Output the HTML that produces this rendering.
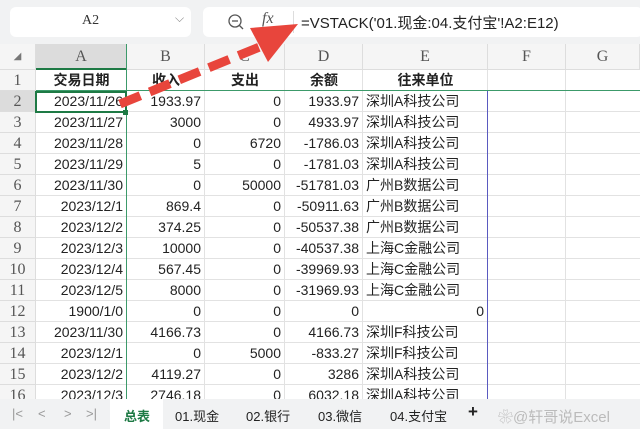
<!DOCTYPE html>
<html><head><meta charset="utf-8"><style>
*{margin:0;padding:0;box-sizing:border-box}
body{width:640px;height:429px;overflow:hidden;background:#fff;position:relative;font-family:"Liberation Sans","Noto Sans CJK SC",sans-serif;font-size:14px;color:#222}
.top{position:absolute;left:0;top:0;width:640px;height:44px;background:#f1f2f3}
.nb{position:absolute;left:10px;top:7px;width:181px;height:30px;background:#fff;border-radius:6px}
.fb{position:absolute;left:203px;top:7px;width:440px;height:30px;background:#fff;border-radius:6px}
.c{position:absolute;height:21px;line-height:21px;white-space:nowrap;overflow:hidden}
.hdr{position:absolute;top:44px;height:26px;line-height:26px;text-align:center;font-family:"Liberation Serif",serif;font-size:16px;color:#555;background:#f5f5f5;border-right:1px solid #ddd;border-bottom:1px solid #ddd}
.rh{position:absolute;left:0;width:36px;height:21px;line-height:21px;text-align:center;font-family:"Liberation Serif",serif;font-size:16px;color:#555;background:#f5f5f5;border-bottom:1px solid #ddd;border-right:1px solid #ddd}
.vl{position:absolute;top:70px;width:1px;height:330px;background:#e2e2e2}
.hl{position:absolute;left:36px;width:604px;height:1px;background:#e2e2e2}
.r{text-align:right;padding-right:4px}
.l{text-align:left;padding-left:3px}
.tabs{position:absolute;left:0;top:399px;width:640px;height:30px;background:#f1f2f3;font-size:13px}
.tabs span{position:absolute;top:7px}
</style></head><body>
<div class="top">
<div class="nb"><div style="position:absolute;left:72px;top:6px;font-family:'Liberation Serif',serif;font-size:14px;color:#333">A2</div><div style="position:absolute;left:165px;top:4px;color:#888;font-size:12px">⌵</div></div>
<div class="fb">
<svg style="position:absolute;left:24px;top:6px" width="18" height="18"><circle cx="8" cy="8" r="6" fill="none" stroke="#555" stroke-width="1.3"/><line x1="5" y1="8" x2="11" y2="8" stroke="#555" stroke-width="1.3"/><line x1="12" y1="12" x2="16" y2="16" stroke="#555" stroke-width="1.3"/></svg>
<div style="position:absolute;left:59px;top:3px;font-family:'Liberation Serif',serif;font-style:italic;font-size:16px;color:#555">fx</div>
<div style="position:absolute;left:90px;top:4px;width:1px;height:22px;background:#ddd"></div>
<div style="position:absolute;left:98px;top:5px;font-size:15px;color:#222">=VSTACK('01.现金:04.支付宝'!A2:E12)</div>
</div>
</div>
<div class="hdr" style="left:0;width:36px;font-size:10px;color:#777">◢</div>
<div class="hdr" style="left:36px;width:91px;background:#dcdcdc;border-bottom:2px solid #1e7a45">A</div>
<div class="hdr" style="left:127px;width:78px">B</div>
<div class="hdr" style="left:205px;width:80px">C</div>
<div class="hdr" style="left:285px;width:78px">D</div>
<div class="hdr" style="left:363px;width:125px">E</div>
<div class="hdr" style="left:488px;width:78px">F</div>
<div class="hdr" style="left:566px;width:74px">G</div>
<div id="g"></div>
<script>
var d=[["交易日期","收入","支出","余额","往来单位"],
["2023/11/26","1933.97","0","1933.97","深圳A科技公司"],
["2023/11/27","3000","0","4933.97","深圳A科技公司"],
["2023/11/28","0","6720","-1786.03","深圳A科技公司"],
["2023/11/29","5","0","-1781.03","深圳A科技公司"],
["2023/11/30","0","50000","-51781.03","广州B数据公司"],
["2023/12/1","869.4","0","-50911.63","广州B数据公司"],
["2023/12/2","374.25","0","-50537.38","广州B数据公司"],
["2023/12/3","10000","0","-40537.38","上海C金融公司"],
["2023/12/4","567.45","0","-39969.93","上海C金融公司"],
["2023/12/5","8000","0","-31969.93","上海C金融公司"],
["1900/1/0","0","0","0","0"],
["2023/11/30","4166.73","0","4166.73","深圳F科技公司"],
["2023/12/1","0","5000","-833.27","深圳F科技公司"],
["2023/12/2","4119.27","0","3286","深圳A科技公司"],
["2023/12/3","2746.18","0","6032.18","深圳A科技公司"]];
var xs=[36,127,205,285,363,488],h="";
[127,205,285,363,488,566].forEach(function(x){h+='<div class="vl" style="left:'+(x-1)+'px"></div>'});
for(var i=0;i<16;i++){var y=70+i*21;
h+='<div class="hl" style="top:'+(y+20)+'px"></div>';
h+='<div class="rh" style="top:'+y+'px;'+(i==1?'background:#dcdcdc;':'')+'">'+(i+1)+'</div>';
for(var j=0;j<5;j++){var w=xs[j+1]-xs[j],cls,t=d[i][j],st="";
if(i==0){cls="";st="text-align:center;font-weight:bold;"}else if(j==4&&i!=11){cls="l"}else cls="r";
h+='<div class="c '+cls+'" style="left:'+xs[j]+'px;top:'+y+'px;width:'+w+'px;'+st+'">'+t+'</div>';}}
document.getElementById('g').innerHTML=h;
</script>
<div style="position:absolute;left:36px;top:90px;width:604px;height:1px;background:#3c9a6a"></div>
<div style="position:absolute;left:126px;top:44px;width:1px;height:356px;background:#3c9a6a"></div>
<div style="position:absolute;left:487px;top:91px;width:1px;height:309px;background:#5a5ac0"></div>
<div style="position:absolute;left:35px;top:91px;width:92px;height:22px;border:2px solid #1e7a45"></div>
<div style="position:absolute;left:123px;top:110px;width:5px;height:5px;background:#1e7a45"></div>
<svg style="position:absolute;left:0;top:0" width="640" height="429">
<line x1="120" y1="104" x2="262" y2="46" stroke="#e8453c" stroke-width="9" stroke-dasharray="22,10"/>
<polygon points="298,24 250,28 268,62" fill="#e8453c"/>
</svg>
<div class="tabs">
<span style="left:12px;color:#999">|&lt;</span><span style="left:38px;color:#999">&lt;</span><span style="left:64px;color:#999">&gt;</span><span style="left:86px;color:#999">&gt;|</span>
<div style="position:absolute;left:110px;top:0;width:53px;height:30px;background:#fff"></div>
<span style="left:124px;color:#1e7a45;font-weight:bold">总表</span>
<span style="left:175px">01.现金</span><span style="left:246px">02.银行</span><span style="left:318px">03.微信</span><span style="left:390px">04.支付宝</span>
<span style="left:468px;font-size:17px;top:3px;font-weight:bold">+</span>
<span style="left:498px;color:#bbb;font-size:15px">❀@轩哥说Excel</span>
</div>
</body></html>
